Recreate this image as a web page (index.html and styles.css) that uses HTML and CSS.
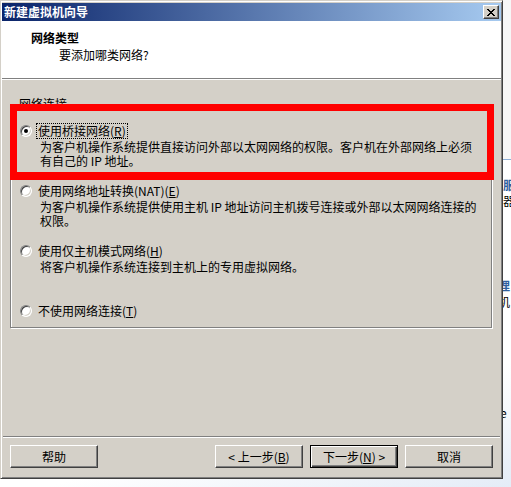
FILE: index.html
```html
<!DOCTYPE html>
<html lang="zh-CN">
<head>
<meta charset="utf-8">
<title>新建虚拟机向导</title>
<link rel="stylesheet" href="styles.css">
</head>
<body>
<div class="screen">
  <div class="window">
    <div class="titlebar">
      <span class="title">新建虚拟机向导</span>
      <span class="close">
        <svg width="8" height="7" viewBox="0 0 8 7" shape-rendering="crispEdges"><path fill="#000" d="M0 0h2v1H0zM6 0h2v1H6zM1 1h2v1H1zM5 1h2v1H5zM2 2h4v1H2zM3 3h2v1H3zM2 4h4v1H2zM1 5h2v1H1zM5 5h2v1H5zM0 6h2v1H0zM6 6h2v1H6z"/></svg>
      </span>
    </div>
    <div class="header">
      <div class="h-title">网络类型</div>
      <div class="h-sub">要添加哪类网络?</div>
    </div>
    <div class="sep"></div>
    <div class="body">
      <div class="group">
        <span class="legend">网络连接</span>
        <div class="option">
          <div class="opt-row"><span class="radio checked"></span><span class="label focus">使用桥接网络(<u>R</u>)</span></div>
          <div class="desc">为客户机操作系统提供直接访问外部以太网网络的权限。客户机在外部网络上必须<br>有自己的 IP 地址。</div>
        </div>
        <div class="option">
          <div class="opt-row"><span class="radio"></span><span class="label">使用网络地址转换(NAT)(<u>E</u>)</span></div>
          <div class="desc">为客户机操作系统提供使用主机 IP 地址访问主机拨号连接或外部以太网网络连接的<br>权限。</div>
        </div>
        <div class="option">
          <div class="opt-row"><span class="radio"></span><span class="label">使用仅主机模式网络(<u>H</u>)</span></div>
          <div class="desc">将客户机操作系统连接到主机上的专用虚拟网络。</div>
        </div>
        <div class="option last">
          <div class="opt-row"><span class="radio"></span><span class="label">不使用网络连接(<u>T</u>)</span></div>
        </div>
      </div>
    </div>
    <div class="sep foot-sep"></div>
    <div class="buttons">
      <span class="btn">帮助</span>
      <span class="spacer"></span>
      <span class="btn">&lt; 上一步(<u>B</u>)</span>
      <span class="btn default">下一步(<u>N</u>) &gt;</span>
      <span class="btn">取消</span>
    </div>
    <div class="annot"></div>
  </div>
  <div class="strip">
    <div class="strip-top"></div>
    <div class="s-item s-a"><div class="s-t">服务</div><div class="s-d">器</div></div>
    <div class="s-item s-b"><div class="s-t">理</div><div class="s-d">机</div></div>
    <div class="s-e">e</div>
  </div>
</div>
</body>
</html>
```

FILE: styles.css
```css
html, body {
  margin: 0;
  padding: 0;
}
body {
  background: #fff;
  font-family: "Noto Sans CJK SC", "Liberation Sans", sans-serif;
  font-size: 12px;
  color: #000;
}
.screen {
  display: flex;
  width: 511px;
  height: 487px;
  overflow: hidden;
  background: linear-gradient(165deg, #fff 80%, #e4ecf7 100%);
}
.window {
  position: relative;
  flex: none;
  width: 503px;
  height: 479px;
  box-sizing: border-box;
  background: #d4d0c8;
  border: 1px solid;
  border-color: #d4d0c8 #404040 #404040 #d4d0c8;
  box-shadow: inset 1px 1px #fff, inset -1px -1px #808080;
  padding: 2px 1px 1px 1px;
  display: flex;
  flex-direction: column;
}
.titlebar {
  flex: none;
  height: 18px;
  background: linear-gradient(to right, #0a246a, #a6caf0);
  display: flex;
  align-items: center;
  justify-content: space-between;
  padding: 0 2px;
}
.title {
  color: #fff;
  font-weight: bold;
  line-height: 18px;
}
.close {
  width: 16px;
  height: 14px;
  box-sizing: border-box;
  background: #d4d0c8;
  border: 1px solid;
  border-color: #fff #404040 #404040 #fff;
  box-shadow: inset -1px -1px #808080;
  display: flex;
  align-items: center;
  justify-content: center;
  padding-top: 1px;
}
.close svg {
  display: block;
}
.header {
  flex: none;
  height: 57px;
  box-sizing: border-box;
  background: #fff;
  padding: 8px 0 0 29px;
}
.h-title {
  font-weight: bold;
  line-height: 17px;
}
.h-sub {
  line-height: 18px;
  padding-left: 28px;
}
.sep {
  flex: none;
  height: 0;
  border-top: 1px solid #808080;
  border-bottom: 1px solid #fff;
}
.foot-sep {
  margin: 0 1px;
}
.body {
  flex: 1;
  padding: 24px 9px 0 8px;
}
.group {
  position: relative;
  border: 1px solid #808080;
  box-shadow: inset 1px 1px #fff, 1px 1px #fff;
  padding: 17px 0 8px 9px;
}
.legend {
  position: absolute;
  left: 6px;
  top: -8px;
  background: #d4d0c8;
  padding: 0 2px;
  line-height: 14px;
}
.option {
  height: 60px;
}
.option.last {
  height: 17px;
}
.opt-row {
  display: flex;
  align-items: center;
  height: 17px;
}
.radio {
  flex: none;
  width: 12px;
  height: 12px;
  box-sizing: border-box;
  border-radius: 50%;
  border: 1px solid;
  border-color: #808080 #fff #fff #808080;
  box-shadow: inset 1px 1px #404040, inset -1px -1px #d4d0c8;
  background: #fff;
  margin-right: 4px;
  display: flex;
  align-items: center;
  justify-content: center;
}
.radio.checked::after {
  content: "";
  width: 4px;
  height: 4px;
  border-radius: 50%;
  background: #000;
}
.label {
  border: 1px dotted transparent;
  padding: 0 1px;
  line-height: 14px;
  white-space: nowrap;
}
.label.focus {
  border-color: #000;
}
.desc {
  margin: 1px 0 0 20px;
  line-height: 14px;
  white-space: nowrap;
}
u {
  text-decoration: underline;
  text-underline-offset: 1px;
}
.buttons {
  flex: none;
  display: flex;
  gap: 7px;
  height: 23px;
  margin: 7px 8px 9px 8px;
}
.spacer {
  flex: 1;
}
.btn {
  flex: none;
  width: 88px;
  height: 23px;
  box-sizing: border-box;
  background: #d4d0c8;
  border: 1px solid;
  border-color: #fff #404040 #404040 #fff;
  box-shadow: inset -1px -1px #808080;
  display: flex;
  align-items: center;
  justify-content: center;
  line-height: 14px;
  white-space: nowrap;
}
.btn.default {
  border-color: #000;
  box-shadow: inset 1px 1px #fff, inset -1px -1px #404040, inset -2px -2px #808080;
}
.annot {
  position: absolute;
  left: 9px;
  top: 103px;
  width: 484px;
  height: 76px;
  box-sizing: border-box;
  border: 7px solid #f00;
  border-bottom-width: 8px;
  pointer-events: none;
}
.strip {
  flex: 1;
  overflow: hidden;
  white-space: nowrap;
}
.strip-top {
  height: 159px;
  background: #f7f7f7;
  border-bottom: 1px solid #8fb0d8;
}
.s-item {
  line-height: 16px;
}
.s-t {
  color: #2f5f9e;
  font-weight: bold;
}
.s-a {
  margin-top: 17px;
}
.s-b {
  margin-top: 69px;
  margin-left: -5px;
}
.s-e {
  margin-top: 96px;
  margin-left: -3px;
  line-height: 14px;
}
```
